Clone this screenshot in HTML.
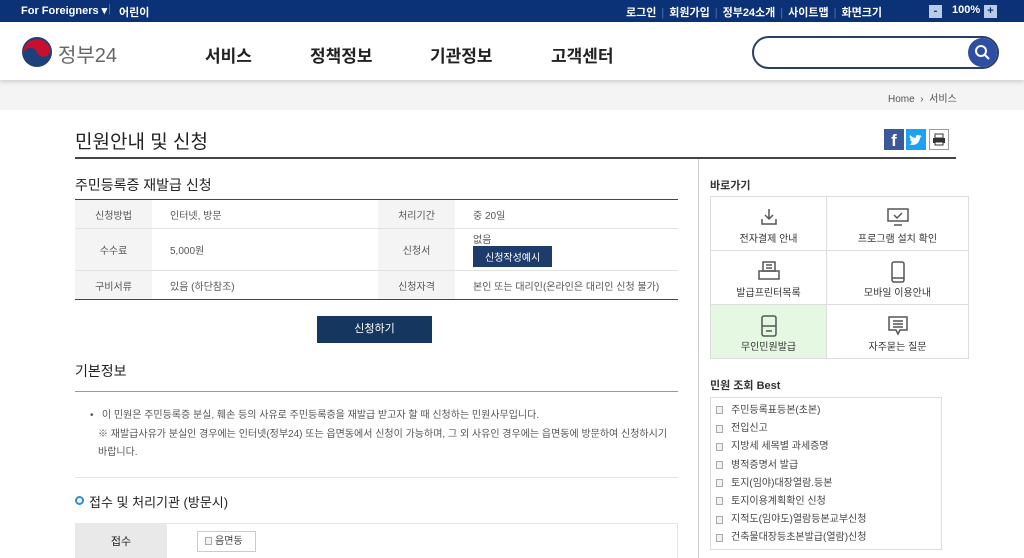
<!DOCTYPE html>
<html><head><meta charset="utf-8"><style>
*{margin:0;padding:0;box-sizing:border-box}
html,body{width:1024px;height:558px;overflow:hidden}
body{font-family:"Liberation Sans","Noto Sans CJK KR",sans-serif;background:#fff;position:relative;color:#222}
.a{position:absolute;white-space:nowrap}
.top{position:absolute;left:0;top:0;width:1024px;height:22px;background:#0b3277;color:#fff;font-size:11px;font-weight:bold}
.hdr{position:absolute;left:0;top:22px;width:1024px;height:58px;background:#fff;box-shadow:0 2px 4px rgba(0,0,0,.15);z-index:2}
.gray{position:absolute;left:0;top:80px;width:1024px;height:30px;background:#f4f4f5}
.nav{font-size:17px;font-weight:bold;color:#222;top:20px}
td{font-size:10px;color:#555;border-bottom:1px solid #e2e2e2;padding-left:18px}
td.l{background:#f4f4f4;text-align:center;padding:0}
.sq{display:inline-block;width:7px;height:8px;border:1px solid #aaa;margin-right:8px;vertical-align:middle;background:#f2f2f2}
.g div{position:absolute;height:54px;font-size:10px;color:#333;text-align:center;border-bottom:1px solid #ddd}
.g span{position:absolute;left:0;right:0;top:33px}
.g svg{position:absolute;left:50%;transform:translateX(-50%);top:10px}
.sep{color:#5570a8;font-weight:normal;padding:0 5px}
</style></head><body>
<div class="top">
<span class="a" style="left:21px;top:4px">For Foreigners ▾</span>
<span class="a" style="left:108px;top:3px;color:#5570a8;font-weight:normal">|</span>
<span class="a" style="left:119px;top:4px">어린이</span>
<span class="a" style="left:626px;top:4px">로그인<span class="sep">|</span>회원가입<span class="sep">|</span>정부24소개<span class="sep">|</span>사이트맵<span class="sep">|</span>화면크기</span>
<span class="a" style="left:929px;top:5px;width:13px;height:13px;background:#b9cbe6;color:#0b3277;text-align:center;line-height:12px">-</span>
<span class="a" style="left:952px;top:4px">100%</span>
<span class="a" style="left:984px;top:5px;width:13px;height:13px;background:#b9cbe6;color:#0b3277;text-align:center;line-height:12px">+</span>
</div>
<div class="hdr">
<svg class="a" style="left:21px;top:14px" width="32" height="32" viewBox="0 0 32 32"><circle cx="16" cy="16" r="15" fill="#1d3f7a"/><path d="M3 22A13 13 0 0 1 29 12A6.5 6.5 0 0 1 16 16A6.5 6.5 0 0 0 3 22Z" fill="#c8102e"/><circle cx="16" cy="16" r="15" fill="none" stroke="#fff" stroke-width="0"/></svg>
<span class="a" style="left:58px;top:17px;font-size:20px;color:#666">정부24</span>
<span class="a nav" style="left:205px">서비스</span>
<span class="a nav" style="left:310px">정책정보</span>
<span class="a nav" style="left:430px">기관정보</span>
<span class="a nav" style="left:551px">고객센터</span>
<div class="a" style="left:752px;top:14px;width:247px;height:33px;border:2px solid #2b3f63;border-radius:17px"></div>
<div class="a" style="left:968px;top:16px;width:29px;height:29px;border-radius:50%;background:#2d4ea3"></div>
<svg class="a" style="left:974px;top:22px" width="17" height="17" viewBox="0 0 17 17"><circle cx="7" cy="7" r="5" stroke="#fff" stroke-width="2" fill="none"/><path d="M11 11L15 15" stroke="#fff" stroke-width="2"/></svg>
</div>
<div class="gray"></div>
<span class="a" style="left:888px;top:90px;font-size:10px;color:#555">Home &nbsp;›&nbsp; 서비스</span>
<span class="a" style="left:75px;top:127px;font-size:19px;color:#222">민원안내 및 신청</span>
<div class="a" style="left:884px;top:129px;width:20px;height:21px;background:#3b5998;color:#fff;font-weight:bold;font-size:17px;text-align:center;line-height:24px">f</div>
<div class="a" style="left:906px;top:129px;width:20px;height:21px;background:#1da1f2"></div>
<svg class="a" style="left:908px;top:133px" width="16" height="14" viewBox="0 0 16 14"><path d="M1 11c4 2 10 1 11-6l2-2-2 .5L13 2l-2 .5C9 1 7 3 8 5 5 5 3 3 2 2c-1 2 0 3 1 4H2c0 1 1 2 2 3H3c2 2-2 2-2 2z" fill="#fff"/></svg>
<div class="a" style="left:929px;top:129px;width:20px;height:21px;border:1px solid #999;background:#fff"></div>
<svg class="a" style="left:932px;top:133px" width="14" height="13" viewBox="0 0 14 13"><rect x="3" y="1" width="8" height="4" fill="none" stroke="#333"/><rect x="1" y="5" width="12" height="5" fill="#333"/><rect x="3" y="9" width="8" height="3" fill="#fff" stroke="#333"/></svg>
<div class="a" style="left:75px;top:157px;width:881px;height:2px;background:#444"></div>
<div class="a" style="left:698px;top:159px;width:1px;height:400px;background:#ccc"></div>
<span class="a" style="left:75px;top:175px;font-size:14px;color:#222">주민등록증 재발급 신청</span>
<table class="a" style="left:75px;top:199px;width:603px;border-collapse:collapse;border-top:1px solid #444;border-bottom:1px solid #444">
<tr style="height:29px"><td class="l" style="width:77px">신청방법</td><td style="width:226px">인터넷, 방문</td><td class="l" style="width:77px">처리기간</td><td>중 20일</td></tr>
<tr style="height:42px"><td class="l">수수료</td><td>5,000원</td><td class="l">신청서</td><td>없음<br><span style="display:inline-block;background:#1d3c6b;color:#fff;padding:3px 12px;font-size:10px;margin-bottom:2px">신청작성예시</span></td></tr>
<tr style="height:29px"><td class="l" style="border:none">구비서류</td><td style="border:none">있음 (하단참조)</td><td class="l" style="border:none">신청자격</td><td style="border:none">본인 또는 대리인(온라인은 대리인 신청 불가)</td></tr>
</table>
<div class="a" style="left:317px;top:316px;width:115px;height:27px;background:#15365e;color:#fff;font-size:11px;text-align:center;line-height:27px">신청하기</div>
<span class="a" style="left:75px;top:361px;font-size:14px">기본정보</span>
<div class="a" style="left:75px;top:391px;width:603px;height:1px;background:#999"></div>
<div class="a" style="left:90px;top:407px;font-size:10px;color:#555;line-height:18.5px;width:590px;white-space:normal">•&nbsp;&nbsp; 이 민원은 주민등록증 분실, 훼손 등의 사유로 주민등록증을 재발급 받고자 할 때 신청하는 민원사무입니다.<br><span style="padding-left:8px">※ 재발급사유가 분실인 경우에는 인터넷(정부24) 또는 읍면동에서 신청이 가능하며, 그 외 사유인 경우에는 읍면동에 방문하여 신청하시기</span><br><span style="padding-left:8px">바랍니다.</span></div>
<div class="a" style="left:75px;top:477px;width:603px;height:1px;background:#e4e4e4"></div>
<div class="a" style="left:75px;top:496px;width:9px;height:9px;border:2px solid #2b8fd8;border-radius:50%"></div>
<span class="a" style="left:89px;top:492px;font-size:13px">접수 및 처리기관 (방문시)</span>
<div class="a" style="left:75px;top:523px;width:603px;height:40px;border:1px solid #e4e4e4"></div>
<div class="a" style="left:75px;top:523px;width:92px;height:40px;background:#e9e9ea;font-size:11px;text-align:center;line-height:38px">접수</div>
<div class="a" style="left:197px;top:531px;width:59px;height:21px;border:1px solid #ccc;font-size:10px;color:#444;line-height:19px;padding-left:7px"><span class="sq" style="margin-right:3px"></span>음면동</div>
<span class="a" style="left:710px;top:177px;font-size:11px;font-weight:bold;color:#333">바로가기</span>
<div class="a g" style="left:710px;top:196px;width:259px;height:163px;border:1px solid #ddd">
<div style="left:0;top:0;width:116px;border-right:1px solid #ddd"><svg width="20" height="20" viewBox="0 0 20 20" fill="none" stroke="#555" stroke-width="1.5"><path d="M10 2v10M6 8l4 4 4-4M3 12v5h14v-5"/></svg><span>전자결제 안내</span></div>
<div style="left:116px;top:0;width:141px"><svg width="22" height="20" viewBox="0 0 22 20" fill="none" stroke="#555" stroke-width="1.5"><rect x="1" y="2" width="20" height="12"/><path d="M7 8l3 3 5-5M7 18h8"/></svg><span>프로그램 설치 확인</span></div>
<div style="left:0;top:54px;width:116px;border-right:1px solid #ddd"><svg width="22" height="20" viewBox="0 0 22 20" fill="none" stroke="#555" stroke-width="1.5"><rect x="5" y="1" width="12" height="9"/><path d="M8 4h6M8 7h6"/><rect x="1" y="10" width="20" height="8"/></svg><span>발급프린터목록</span></div>
<div style="left:116px;top:54px;width:141px"><svg width="20" height="22" viewBox="0 0 20 22" fill="none" stroke="#555" stroke-width="1.5"><rect x="4" y="1" width="12" height="20" rx="2"/><path d="M4 17h12"/></svg><span>모바일 이용안내</span></div>
<div style="left:0;top:108px;width:116px;background:#e5f8e2;border-bottom:none;border-right:1px solid #ddd;height:53px"><svg width="20" height="22" viewBox="0 0 20 22" fill="none" stroke="#555" stroke-width="1.5"><rect x="3" y="1" width="14" height="20" rx="2"/><path d="M3 11h14M7 16h6"/></svg><span>무인민원발급</span></div>
<div style="left:116px;top:108px;width:141px;border:none"><svg width="22" height="22" viewBox="0 0 22 22" fill="none" stroke="#555" stroke-width="1.5"><path d="M2 2h18v13H13l-2 4-2-4H2z"/><path d="M6 6h10M6 9h10M6 12h10"/></svg><span>자주묻는 질문</span></div>
</div>
<span class="a" style="left:710px;top:377px;font-size:11px;font-weight:bold;color:#333">민원 조회 Best</span>
<div class="a" style="left:710px;top:397px;width:232px;height:153px;border:1px solid #ddd;font-size:10px;color:#444;line-height:18.2px;padding:4px 0 0 5px">
<div><span class="sq"></span>주민등록표등본(초본)</div>
<div><span class="sq"></span>전입신고</div>
<div><span class="sq"></span>지방세 세목별 과세증명</div>
<div><span class="sq"></span>병적증명서 발급</div>
<div><span class="sq"></span>토지(임야)대장열람.등본</div>
<div><span class="sq"></span>토지이용계획확인 신청</div>
<div><span class="sq"></span>지적도(임야도)열람등본교부신청</div>
<div><span class="sq"></span>건축물대장등초본발급(열람)신청</div>
</div>
</body></html>
